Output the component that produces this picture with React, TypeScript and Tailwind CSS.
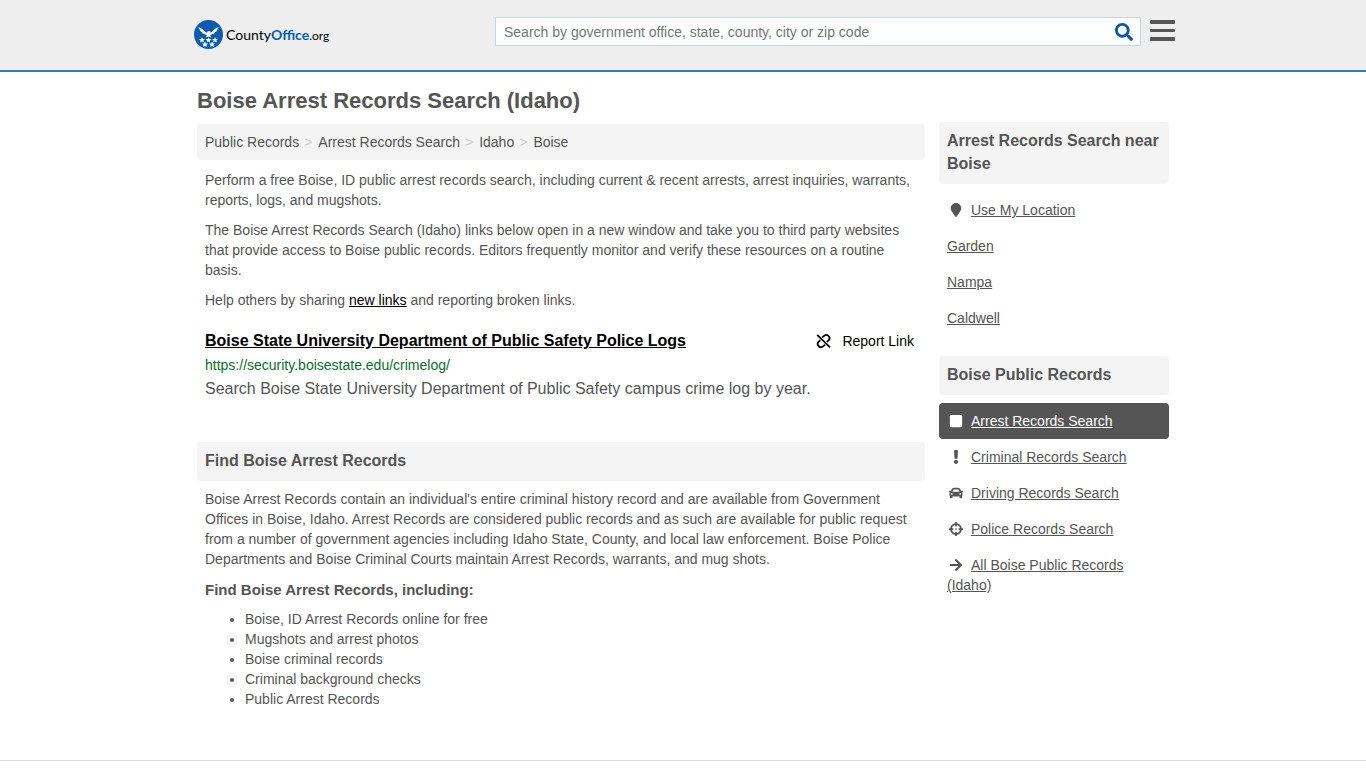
import type { ReactNode } from "react";
import type { IconType } from "react-icons";
import {
  FaArrowRight,
  FaCar,
  FaCrosshairs,
  FaExclamation,
  FaMapMarker,
  FaSearch,
  FaSquare,
} from "react-icons/fa";

type SideLink = { label: string; icon?: IconType; active?: boolean };

const crumbs = ["Public Records", "Arrest Records Search", "Idaho", "Boise"];

const nearby: SideLink[] = [
  { label: "Use My Location", icon: FaMapMarker },
  { label: "Garden" },
  { label: "Nampa" },
  { label: "Caldwell" },
];

const publicRecords: SideLink[] = [
  { label: "Arrest Records Search", icon: FaSquare, active: true },
  { label: "Criminal Records Search", icon: FaExclamation },
  { label: "Driving Records Search", icon: FaCar },
  { label: "Police Records Search", icon: FaCrosshairs },
  { label: "All Boise Public Records (Idaho)", icon: FaArrowRight },
];

const included = [
  "Boise, ID Arrest Records online for free",
  "Mugshots and arrest photos",
  "Boise criminal records",
  "Criminal background checks",
  "Public Arrest Records",
];

export default function App() {
  return (
    <div className="bg-white font-['Liberation_Sans',Arial,sans-serif] text-sm leading-5 text-[#555]">
      <Header />
      <div className="mx-auto max-w-[972px] pb-[51px] pt-[17px]">
        <h1 className="text-[22px] font-bold leading-6">Boise Arrest Records Search (Idaho)</h1>
        <div className="mt-[9px] flex flex-col gap-[14px] md:flex-row">
          <Main />
          <aside className="md:w-[230px]">
            <SideSection title="Arrest Records Search near Boise" links={nearby} />
            <SideSection title="Boise Public Records" links={publicRecords} />
          </aside>
        </div>
      </div>
      <footer className="h-2 border-t border-[#ddd]" />
    </div>
  );
}

function Header() {
  return (
    <header className="border-b-2 border-[#337ab7] bg-[#eee]">
      <div className="mx-auto flex h-[70px] max-w-[984px] items-start justify-between pl-[3px]">
        <a href="#" aria-label="CountyOffice.org" className="mt-5 flex items-center gap-[3px]">
          <Logo />
          <span className="font-[Lato,sans-serif] text-sm leading-[29px] text-black">
            County<b className="text-[#0b5cad]">Office</b>
            <span className="text-xs">.org</span>
          </span>
        </a>
        <div className="mt-[17px] flex items-start gap-[9px]">
          <form className="flex h-[29px] w-[646px] items-center border border-[#c3d5e6] bg-white">
            <input
              type="search"
              aria-label="Search"
              placeholder="Search by government office, state, county, city or zip code"
              className="h-full min-w-0 flex-1 px-2 outline-none placeholder:text-[#757575]"
            />
            <button type="button" aria-label="Search" className="px-[7px] text-[#0b57a8]">
              <FaSearch className="size-[18px]" />
            </button>
          </form>
          <button type="button" aria-label="Menu" className="mt-[3px] flex w-[25px] flex-col gap-[5px]">
            <span className="h-1 w-full rounded-[1px] bg-[#555]" />
            <span className="h-[3px] w-full rounded-[1px] bg-[#555]" />
            <span className="h-1 w-full rounded-[1px] bg-[#555]" />
          </button>
        </div>
      </div>
    </header>
  );
}

function Logo() {
  return (
    <svg viewBox="0 0 58 58" className="size-[29px]" aria-hidden="true">
      <circle cx="29" cy="29" r="29" fill="#0b5cad" />
      <g fill="#fff">
        <path d="M9 14 Q18 17 25 26 L27 23 Q29 21 33 23 L33 26 Q40 17 49 14 Q49 18 46 20 Q47 23 42 24 Q42 28 37 28 L32 31 L35 35 L29 33 L23 35 L26 31 L21 28 Q16 28 16 24 Q11 23 12 20 Q9 18 9 14Z" />
        <Star x={16} y={40} />
        <Star x={29} y={40} />
        <Star x={42} y={40} />
        <Star x={22} y={49} />
        <Star x={36} y={49} />
      </g>
    </svg>
  );
}

function Star({ x, y }: { x: number; y: number }) {
  return (
    <path
      transform={`translate(${x} ${y})`}
      d="M0 -6 L1.7 -2 L6 -1.8 L2.7 1 L3.7 5 L0 2.8 L-3.7 5 L-2.7 1 L-6 -1.8 L-1.7 -2Z"
    />
  );
}

function UnlinkIcon() {
  return (
    <svg
      viewBox="0 0 16 16"
      className="size-4"
      fill="none"
      stroke="currentColor"
      strokeWidth="1.8"
      aria-hidden="true"
    >
      <path d="M2.2 1.8 L15 14.4" />
      <path d="M7.2 4.4 L9.2 2.8 A3.2 3.2 0 0 1 13.8 7.2 L11.9 9" />
      <path d="M10 11.8 L8 13.4 A3.2 3.2 0 0 1 3.4 9 L5.3 7.2" />
    </svg>
  );
}

function Main() {
  return (
    <main className="mt-[2px] min-w-0 flex-1">
      <nav aria-label="Breadcrumb" className="rounded bg-[#f4f4f4] p-2">
        <ol className="flex flex-wrap">
          {crumbs.map((crumb, i) => (
            <li key={crumb}>
              {i > 0 && <span className="pl-[5px] pr-[6px] text-[#ccc]">&gt;</span>}
              <a href="#">{crumb}</a>
            </li>
          ))}
        </ol>
      </nav>

      <div className="mt-[10px] flex flex-col gap-[10px] px-2">
        <p>
          Perform a free Boise, ID public arrest records search, including current &amp; recent
          arrests, arrest inquiries, warrants, reports, logs, and mugshots.
        </p>
        <p>
          The Boise Arrest Records Search (Idaho) links below open in a new window and take you to
          third party websites that provide access to Boise public records. Editors frequently
          monitor and verify these resources on a routine basis.
        </p>
        <p>
          Help others by sharing{" "}
          <a href="#" className="text-black underline">
            new links
          </a>{" "}
          and reporting broken links.
        </p>
      </div>

      <article className="mt-[19px] px-2">
        <div className="flex items-center justify-between pr-[3px] text-black">
          <h2 className="text-base font-bold leading-6">
            <a href="#" className="underline">
              Boise State University Department of Public Safety Police Logs
            </a>
          </h2>
          <button type="button" className="flex items-center gap-[11px]">
            <UnlinkIcon />
            Report Link
          </button>
        </div>
        <p className="mt-[2px] text-[#0a6b2d]">https://security.boisestate.edu/crimelog/</p>
        <p className="mt-[2px] text-base leading-[23px]">
          Search Boise State University Department of Public Safety campus crime log by year.
        </p>
      </article>

      <section className="mt-[42px]">
        <SectionTitle>Find Boise Arrest Records</SectionTitle>
        <div className="px-2">
          <p className="mt-2">
            Boise Arrest Records contain an individual's entire criminal history record and are
            available from Government Offices in Boise, Idaho. Arrest Records are considered public
            records and as such are available for public request from a number of government
            agencies including Idaho State, County, and local law enforcement. Boise Police
            Departments and Boise Criminal Courts maintain Arrest Records, warrants, and mug shots.
          </p>
          <h3 className="mt-[10px] text-[15px] font-bold leading-[22px]">
            Find Boise Arrest Records, including:
          </h3>
          <ul className="mt-2 list-disc pl-10">
            {included.map((item) => (
              <li key={item}>{item}</li>
            ))}
          </ul>
        </div>
      </section>
    </main>
  );
}

function SectionTitle({ children }: { children: ReactNode }) {
  return (
    <h2 className="rounded bg-[#f4f4f4] px-2 pb-[9px] pt-[7px] text-base font-bold leading-[23px]">
      {children}
    </h2>
  );
}

function SideSection({ title, links }: { title: string; links: SideLink[] }) {
  return (
    <section className="mb-5">
      <SectionTitle>{title}</SectionTitle>
      <ul className="mt-2">
        {links.map(({ label, icon: Icon, active }) => (
          <li key={label} className={`rounded p-2 ${active ? "bg-[#555] text-white" : ""}`}>
            {Icon && <Icon className="mr-[6px] inline-block h-[14px] w-[18px] align-[-2px]" />}
            <a href="#" className="underline">
              {label}
            </a>
          </li>
        ))}
      </ul>
    </section>
  );
}
